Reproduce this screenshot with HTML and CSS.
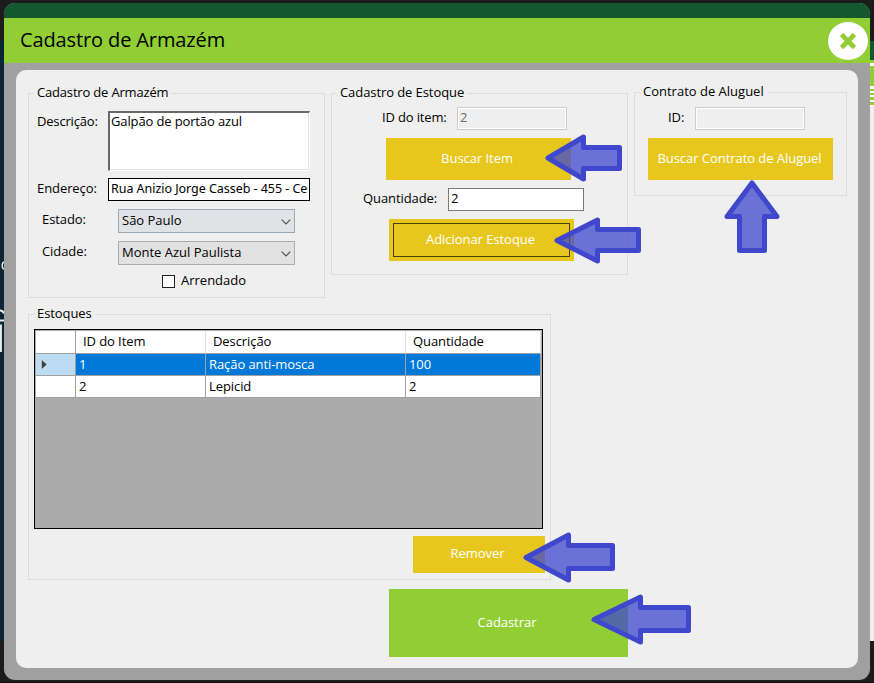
FILE: index.html
```html
<!DOCTYPE html>
<html lang="pt-BR">
<head>
<meta charset="utf-8">
<title>Cadastro de Armazém</title>
<link rel="stylesheet" href="styles.css">
</head>
<body>
<svg class="backdrop" width="874" height="683" viewBox="0 0 874 683" aria-hidden="true" shape-rendering="crispEdges">
  <rect width="874" height="683" fill="#1c1c1c"/>
  <rect y="41" width="4" height="600" fill="#0d2633"/>
  <rect x="870" y="41" width="4" height="600" fill="#efefef"/>
  <rect x="870" y="41" width="4" height="19" fill="#13582f"/>
  <path fill="#fff" d="M870 62h4v44h-4z"/>
  <path fill="#91cd35" d="M870 60h4v3h-4zM870 66h4v20h-4zM870 89h4v2h-4zM870 93h4v2h-4zM870 97h4v3h-4zM870 102h4v3h-4z"/>
  <path stroke="#dfe5e8" stroke-width="1.5" fill="none" shape-rendering="auto" d="M4.500 262q-2.300 0-2.300 3.500t2.300 3.500"/>
  <path stroke="#e8ecee" stroke-width="2.200" fill="none" shape-rendering="auto" d="M0 310.500q3 0 4 3M0 320.500h4M0 325.500h.800V351H0"/>
  <rect y="682" width="874" height="1" fill="#111"/>
</svg>
<main class="window">
  <div class="window-strip"></div>
  <header class="titlebar">
    <h1>Cadastro de Armazém</h1>
    <button class="close" aria-label="Fechar">
      <svg width="40" height="38" viewBox="0 0 40 38"><ellipse cx="20" cy="19" rx="20" ry="19" fill="#fff"/><path d="M13.500 12.500 26.500 25.500M26.500 12.500 13.500 25.500" stroke="#91cd35" stroke-width="4.600"/></svg>
    </button>
  </header>
  <div class="panel">
    <div class="top">
      <section class="group warehouse">
        <h2>Cadastro de Armazém</h2>
        <div class="field field-desc"><label>Descrição:</label><div class="textarea">Galpão de portão azul</div></div>
        <div class="field field-addr"><label>Endereço:</label><div class="input address">Rua Anizio Jorge Casseb - 455 - Ce</div></div>
        <div class="field field-combo"><label>Estado:</label><div class="combo hot"><span>São Paulo</span><svg width="10" height="6" viewBox="0 0 10 6"><path d="M.7.7 5 5 9.300.7"/></svg></div></div>
        <div class="field field-combo"><label>Cidade:</label><div class="combo"><span>Monte Azul Paulista</span><svg width="10" height="6" viewBox="0 0 10 6"><path d="M.7.7 5 5 9.300.7"/></svg></div></div>
        <div class="check"><i></i><span>Arrendado</span></div>
      </section>
      <section class="group stock">
        <h2>Cadastro de Estoque</h2>
        <div class="field item-id"><label>ID do item:</label><div class="input disabled">2</div></div>
        <button class="btn search-item">Buscar Item</button>
        <div class="field quantity"><label>Quantidade:</label><div class="input">2</div></div>
        <button class="btn add">Adicionar Estoque</button>
      </section>
      <section class="group contract">
        <h2>Contrato de Aluguel</h2>
        <div class="field contract-id"><label>ID:</label><div class="input disabled"></div></div>
        <button class="btn search-contract">Buscar Contrato de Aluguel</button>
      </section>
    </div>
    <section class="group stocks">
      <h2>Estoques</h2>
      <div class="grid">
        <div class="tr head"><div></div><div>ID do Item</div><div>Descrição</div><div>Quantidade</div></div>
        <div class="tr selected"><div><svg width="7" height="11" viewBox="0 0 7 11"><path d="M.5.5 6 5.500.5 10.500z" fill="#404040" stroke="#fff" stroke-width=".4"/></svg></div><div>1</div><div>Ração anti-mosca</div><div>100</div></div>
        <div class="tr"><div></div><div>2</div><div>Lepicid</div><div>2</div></div>
      </div>
      <button class="btn remove">Remover</button>
    </section>
    <button class="btn register">Cadastrar</button>
  </div>
</main>
<svg class="arrows" width="874" height="683" viewBox="0 0 874 683" aria-hidden="true">
  <path d="M548 158 583.500 137V147.500H619.500V168.500H583.500V179z"/>
  <path d="M557 240.500 597.500 220V229.500H638.500V250.500H597.500V261z"/>
  <path d="M526 557.500 568.500 535V545.500H612.500V568.500H568.500V580z"/>
  <path d="M594 619.500 640.500 597V607.500H688.500V630.500H640.500V642z"/>
  <path d="M752 183 777 216.500H764.500V250.500H739.500V216.500H727z"/>
</svg>
</body>
</html>
```

FILE: styles.css
```css
* { box-sizing: border-box; }
html, body { margin: 0; height: 683px; overflow: hidden; }
body { background: #1c1c1c; font: 13px/18px "Open Sans", "Noto Sans", sans-serif; letter-spacing: -.08px; color: #000; padding: 3px 4px; }
h1, h2 { margin: 0; font-weight: 400; }
button { font: inherit; letter-spacing: inherit; border: 0; padding: 0; margin: 0; }

.backdrop { position: absolute; left: 0; top: 0; z-index: -1; }
.arrows { position: absolute; left: 0; top: 0; pointer-events: none; }
.arrows path { fill: #3f48cc; fill-opacity: .75; stroke: #3f48cc; stroke-width: 5; stroke-linejoin: round; }

.window { width: 866px; height: 677px; border-radius: 11px; overflow: hidden; background: #a0a0a0; }
.window-strip { height: 15px; background: #13582f; }
.titlebar { height: 45px; background: #91cd35; display: flex; justify-content: space-between; align-items: center; padding: 0 2px 0 16px; }
.titlebar h1 { font-size: 20px; line-height: 26px; padding-bottom: 2px; letter-spacing: -.12px; }
.close { width: 40px; height: 38px; background: none; }
.close svg { display: block; }

.panel { width: 842px; height: 598px; margin: 7px 0 0 12px; padding: 22px 0 0 12px; border-radius: 10px; background: #efefef; }
.top { display: flex; align-items: flex-start; gap: 6px; height: 222px; }
.group { display: flex; flex-direction: column; border: 1px solid #dcdcdc; }
.group h2 { width: max-content; font-size: 13px; line-height: 16px; margin: -10px 0 2px 5px; padding: 0 3px; background: #efefef; }
.field { display: flex; align-items: flex-start; }
.input { border: 1px solid #7a7a7a; background: #fff; height: 23px; line-height: 19px; padding-left: 2px; white-space: nowrap; overflow: hidden; }
.input.disabled { border-color: #ccc; background: #efefef; box-shadow: inset 0 0 0 1px #fff; color: #6d6d6d; }

.warehouse { width: 297px; height: 205px; margin-top: 1px; }
.warehouse h2 { letter-spacing: -.18px; }
.warehouse label { width: 71px; }
.warehouse .field { margin-left: 8px; }
.field-desc { margin-top: 9px; }
.field-desc label { padding-top: 1px; letter-spacing: -.18px; }
.textarea { width: 202px; height: 60px; background: #fff; border: 1px solid #fff; border-top: 2px solid #696969; border-left: 2px solid #696969; box-shadow: inset -1px -1px #e3e3e3; padding-left: 1px; line-height: 16px; letter-spacing: -.13px; }
.field-addr { margin-top: 7px; }
.field-addr label { padding-top: 1px; }
.address { width: 202px; border-color: #000; font: 12.5px/20px "Noto Sans", sans-serif; letter-spacing: -.04px; }
.warehouse .field-combo { margin: 8px 0 0 13px; }
.warehouse .field-combo label { width: 76px; padding-top: 1px; }
.combo { width: 177px; height: 24px; border: 1px solid #adadad; background: #e1e1e1; display: flex; justify-content: space-between; align-items: center; padding: 0 3px; }
.combo span { padding-bottom: 2px; letter-spacing: 0; }
.combo.hot { border-color: #9aa7b5; background: #e0e2e5; }
.combo svg { margin-top: 1px; fill: none; stroke: #555; stroke-width: 1.2; }
.check { display: flex; align-items: center; gap: 6px; margin: 7px 0 0 133px; }
.check i { width: 13px; height: 13px; border: 1px solid #222; background: #fff; }
.check span { margin: -1px 0 1px; letter-spacing: 0; }

.stock { width: 297px; height: 182px; margin-top: 1px; }
.item-id { margin: 5px 0 0 50px; }
.item-id label { width: 75px; padding-top: 1px; letter-spacing: -.15px; }
.item-id .input, .contract-id .input { width: 110px; }
.btn { display: block; background: #e7c71e; color: #fff; text-align: center; padding: 0 3px 2px 0; letter-spacing: -.05px; }
.search-item { width: 185px; height: 42px; margin: 8px 0 0 54px; }
.quantity { margin: 8px 0 0 31px; }
.quantity label { width: 85px; padding-top: 1px; }
.quantity .input { width: 136px; }
.add { width: 185px; height: 42px; margin: 8px 0 0 57px; outline: 1px solid #4a400a; outline-offset: -5px; padding-right: 2px; }

.contract { width: 213px; height: 104px; }
.contract h2 { letter-spacing: 0; }
.contract-id { margin: 6px 0 0 33px; }
.contract-id label { width: 27px; padding-top: 1px; }
.search-contract { width: 185px; height: 42px; margin: 8px 0 0 13px; padding-right: 2px; }

.stocks { width: 523px; height: 266px; }
.grid { width: 509px; height: 200px; margin: 6px 0 0 5px; border: 1px solid #000; background: #ababab; padding: 1px; }
.tr { display: grid; grid-template-columns: 40px 130px 200px 135px; width: 505px; height: 22px; line-height: 21px; }
.tr > div { background: #fff; border-right: 1px solid #a0a0a0; border-bottom: 1px solid #a0a0a0; padding-left: 3px; }
.head { height: 23px; line-height: 20px; }
.head > div { padding-left: 7px; border-right-color: #e0e0e0; }
.head > div:first-child { border-right-color: #a0a0a0; }
.selected > div { background: #0078d7; color: #fff; }
.selected > div:first-child { background: #bcdcf4; display: flex; align-items: center; padding-left: 5px; }
.remove { width: 132px; height: 37px; line-height: 33px; margin: 7px 0 0 384px; }
.register { width: 239px; height: 68px; margin: 9px 0 0 361px; background: #91cd35; }
```
